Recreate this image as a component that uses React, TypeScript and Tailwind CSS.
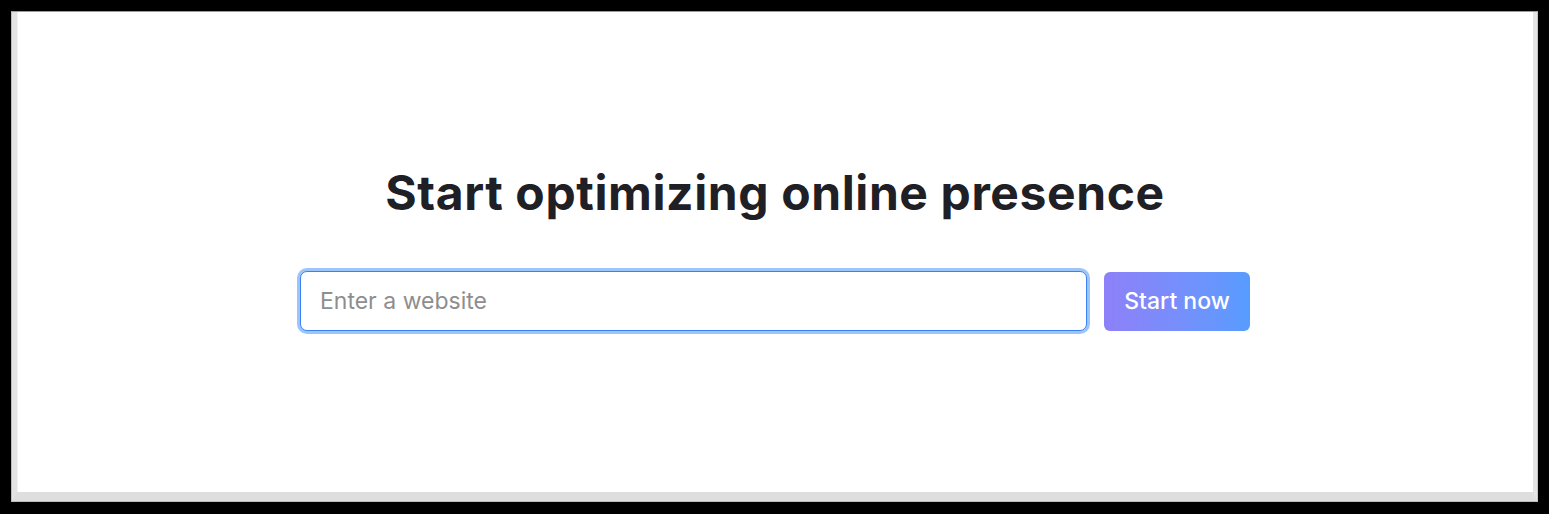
import React from 'react';

export default function App() {
  return (
    <div className="w-[1549px] h-[514px] bg-black pt-[11px] pl-[11px] pr-[11px] pb-[12px] font-['Inter','Liberation_Sans',sans-serif]">
      <div className="h-full w-full border-t border-t-[#9a9a9a] border-l border-l-[#bdbdbd] border-r border-r-[#c4c4c4] border-b border-b-[#bdbdbd]">
        <div className="h-full w-full bg-white border-l-[5px] border-l-[#e3e3e3] border-r-[4px] border-r-[#e4e4e4] border-b-[9px] border-b-[#dedede] shadow-[inset_1px_0_0_#f2f2f2]">
          <div className="flex flex-col items-center pt-[152px]">
            <h1 className="text-[48px] leading-[58px] font-bold tracking-[0.6px] text-[#1f2025]">
              Start optimizing online presence
            </h1>
            <form className="mt-[49px] flex items-center gap-[17px]" onSubmit={(e) => e.preventDefault()}>
              <input
                type="text"
                placeholder="Enter a website"
                className="w-[787px] h-[60px] rounded-[7px] border border-[#3b82f6] bg-white px-[19px] text-[23px] text-[#333] placeholder:text-[#8e8e8e] outline-none ring-[3px] ring-[#9cc6fb]"
              />
              <button
                type="submit"
                className="w-[146px] h-[59px] rounded-[6px] bg-gradient-to-r from-[#8d80f8] to-[#579cff] text-white text-[23px] font-medium"
              >
                Start now
              </button>
            </form>
          </div>
        </div>
      </div>
    </div>
  );
}
